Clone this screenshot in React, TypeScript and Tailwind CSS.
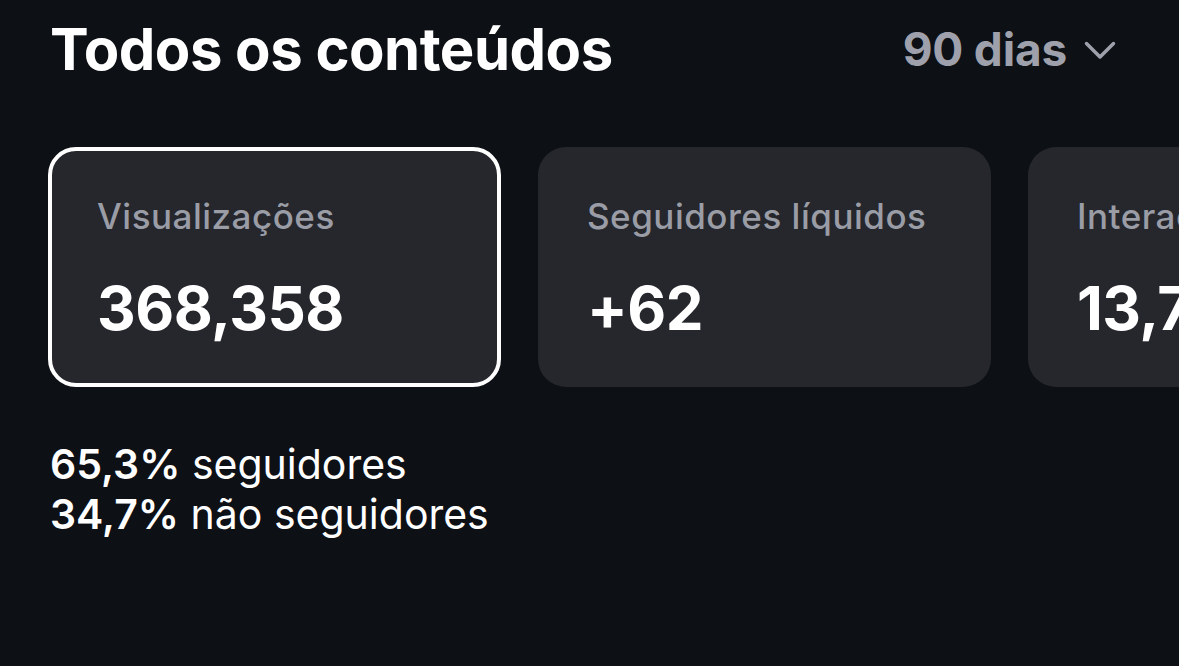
const cards = [
  { label: 'Visualizações', value: '368,358', active: true },
  { label: 'Seguidores líquidos', value: '+62', active: false },
  { label: 'Interações', value: '13,742', active: false },
];

export default function App() {
  return (
    <div className="h-[666px] w-[1179px] overflow-hidden bg-[#0d1015] font-['Inter',sans-serif] text-white">
      <div className="flex items-center justify-between pl-[50px] pr-[63px] pt-[14px]">
        <h1 className="text-[58px] font-bold leading-[70px] tracking-[-0.5px]">Todos os conteúdos</h1>
        <button className="flex items-center gap-[17px] text-[46px] font-bold leading-[70px] tracking-[-0.2px] text-[#9ea1ab]">
          90 dias
          <svg width="32" height="19" viewBox="0 0 32 19" fill="none" className="mt-[2px]">
            <path d="M2.5 2.5 L16 16 L29.5 2.5" stroke="currentColor" strokeWidth="3.5" strokeLinecap="round" strokeLinejoin="round" />
          </svg>
        </button>
      </div>

      <div className="mt-[63px] flex gap-[37px] pl-[48px]">
        {cards.map((c) => (
          <div
            key={c.label}
            className={
              c.active
                ? 'flex h-[240px] w-[453px] shrink-0 flex-col rounded-[28px] border-[4px] border-white bg-[#25272c] pl-[45px] pt-[43px]'
                : 'flex h-[240px] w-[453px] shrink-0 flex-col rounded-[28px] bg-[#25272c] pl-[49px] pt-[47px]'
            }
          >
            <span className="text-[35px] font-medium leading-[44px] tracking-[0.5px] text-[#9a9ca6]">{c.label}</span>
            <span className="mt-[35px] text-[60px] font-bold leading-[70px] tracking-[-0.5px]">{c.value}</span>
          </div>
        ))}
      </div>

      <div className="mt-[52px] pl-[50px] text-[41px] leading-[50px]">
        <p>
          <span className="font-semibold">65,3%</span> seguidores
        </p>
        <p>
          <span className="font-semibold">34,7%</span> não seguidores
        </p>
      </div>
    </div>
  );
}
